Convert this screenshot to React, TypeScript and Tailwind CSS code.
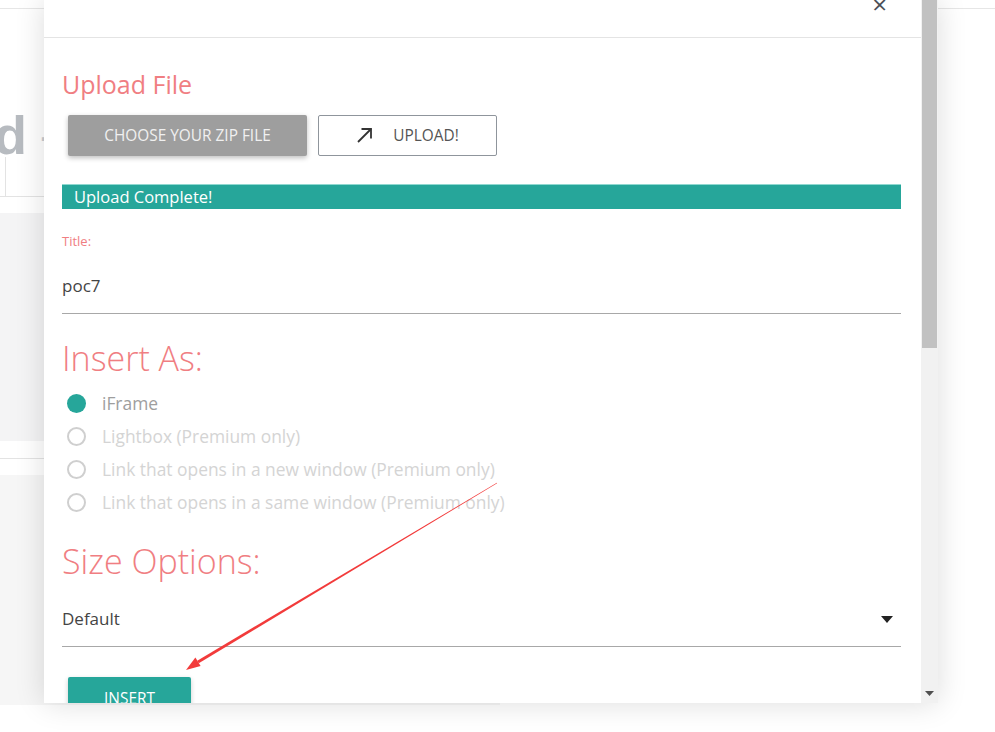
import React from "react";

const FONT = { fontFamily: '"Open Sans", "Noto Sans", sans-serif' };

function Radio({ label, checked }: { label: string; checked?: boolean }) {
  return (
    <div className="flex items-center h-[33px] shrink-0">
      {checked ? (
        <span className="ml-[5px] w-[19px] h-[19px] rounded-full bg-[#26a69a]" />
      ) : (
        <span className="ml-[5px] w-[19px] h-[19px] rounded-full border-2 border-[#cfcfcf]" />
      )}
      <span className={`ml-[16px] text-[17.4px] ${checked ? "text-[#9e9e9e]" : "text-[#d4d4d4]"}`}>{label}</span>
    </div>
  );
}

export default function App() {
  return (
    <div className="relative w-[995px] h-[732px] overflow-hidden bg-white" style={FONT}>
      {/* background page */}
      <div className="flex flex-col h-full">
        <div className="shrink-0 h-[9px] border-b border-[#e6e6e6]" />
        <div className="shrink-0 mt-[104px] flex items-center h-[44px]">
          <span className="ml-[-6px] text-[54px] font-bold leading-none text-[#b7bbc0]" style={{ fontFamily: '"Liberation Sans", sans-serif' }}>d</span>
          <span className="ml-[14px] text-[30px] font-bold text-[#c9ccd0]">-</span>
        </div>
        <div className="shrink-0 w-[500px] h-[40px] border-b border-[#e3e3e3]">
          <div className="ml-[5px] h-full border-l border-[#e3e3e3]" />
        </div>
        <div className="shrink-0 w-[500px] mt-[16px] h-[228px] bg-[#f4f4f5]" />
        <div className="shrink-0 w-[500px] h-[18px] border-b border-[#e3e3e3]" />
        <div className="shrink-0 w-[500px] mt-[16px] h-[230px] bg-[#f6f6f6]" />
      </div>

      {/* modal */}
      <div className="absolute left-[44px] top-0 w-[894px] h-[703px] flex bg-white shadow-[0_0_28px_rgba(0,0,0,0.14)]">
        <div className="w-[877px] h-full overflow-hidden flex flex-col pl-[18px] pr-[20px]">
          <div className="shrink-0 -ml-[18px] mr-[-20px] h-[38px] border-b border-[#e4e4e4] flex justify-end">
            <span className="mr-[34px] mt-[-9px] text-[26px] leading-none text-[#4a4f57]">×</span>
          </div>
          <div className="shrink-0 mt-[30px] h-[32px] flex items-center text-[25px] text-[#f07e82] leading-none">Upload File</div>
          <div className="shrink-0 mt-[15px] flex items-center gap-[11px]">
            <button className="ml-[6px] w-[239px] h-[41px] rounded-[2px] bg-[#9e9e9e] text-[#f0f0f0] text-[15.4px] shadow-[0_2px_5px_rgba(0,0,0,0.25)]">
              CHOOSE YOUR ZIP FILE
            </button>
            <button className="w-[179px] h-[41px] rounded-[2px] border border-[#8f959c] bg-white flex items-center justify-center gap-[20px] text-[#555] text-[15.4px]">
              <svg width="17" height="17" viewBox="0 0 17 17" fill="none" stroke="#333" strokeWidth="1.8">
                <path d="M2 15 L15 2" />
                <path d="M5.5 2 H15 V11.5" />
              </svg>
              <span>UPLOAD!</span>
            </button>
          </div>
          <div className="shrink-0 mt-[28px] h-[25px] bg-[#26a69a] border-t border-[#8fd8d0] flex items-center pl-[12px] text-white text-[16.5px] leading-none">
            Upload Complete!
          </div>
          <div className="shrink-0 mt-[25px] h-[16px] flex items-center text-[13px] text-[#f07e82]">Title:</div>
          <div className="shrink-0 mt-[22px] h-[28px] flex items-center text-[17px] text-[#444]">poc7</div>
          <div className="shrink-0 mt-[13px] h-px bg-[#a8a8a8]" />
          <div className="shrink-0 mt-[22px] h-[44px] flex items-center text-[34px] font-light text-[#f07e82] leading-none">Insert As:</div>
          <div className="shrink-0 mt-[7px] flex flex-col">
            <Radio label="iFrame" checked />
            <Radio label="Lightbox (Premium only)" />
            <Radio label="Link that opens in a new window (Premium only)" />
            <Radio label="Link that opens in a same window (Premium only)" />
          </div>
          <div className="shrink-0 mt-[20px] h-[44px] flex items-center text-[34px] font-light text-[#f07e82] leading-none">Size Options:</div>
          <div className="shrink-0 mt-[22px] h-[28px] flex items-center justify-between text-[17px] text-[#444]">
            <span>Default</span>
            <svg width="12" height="7" viewBox="0 0 12 7" className="mr-[8px]">
              <path d="M0 0 H12 L6 7 Z" fill="#222" />
            </svg>
          </div>
          <div className="shrink-0 mt-[13px] h-px bg-[#a8a8a8]" />
          <div className="shrink-0 mt-[30px]">
            <button className="ml-[6px] w-[123px] h-[36px] rounded-[2px] bg-[#26a69a] text-white text-[15.4px] pt-[7px] shadow-[0_2px_5px_rgba(0,0,0,0.2)]">
              INSERT
            </button>
          </div>
        </div>
        {/* scrollbar */}
        <div className="w-[17px] h-full bg-[#f1f1f1] flex flex-col items-center">
          <div className="shrink-0 w-[15px] h-[348px] bg-[#c1c1c1]" />
          <div className="flex-1" />
          <svg width="9" height="5" viewBox="0 0 9 5" className="mb-[7px] shrink-0">
            <path d="M0 0 H9 L4.5 5 Z" fill="#505050" />
          </svg>
        </div>
      </div>

      {/* red annotation arrow */}
      <svg className="absolute inset-0 pointer-events-none" width="995" height="732" viewBox="0 0 995 732">
        <polygon points="497.13,483.21 496.87,482.79 197.23,660.71 198.77,663.29" fill="#f23b3b" />
        <polygon points="186,670 195.4,657.5 200.6,666.1" fill="#f23b3b" />
      </svg>
    </div>
  );
}
